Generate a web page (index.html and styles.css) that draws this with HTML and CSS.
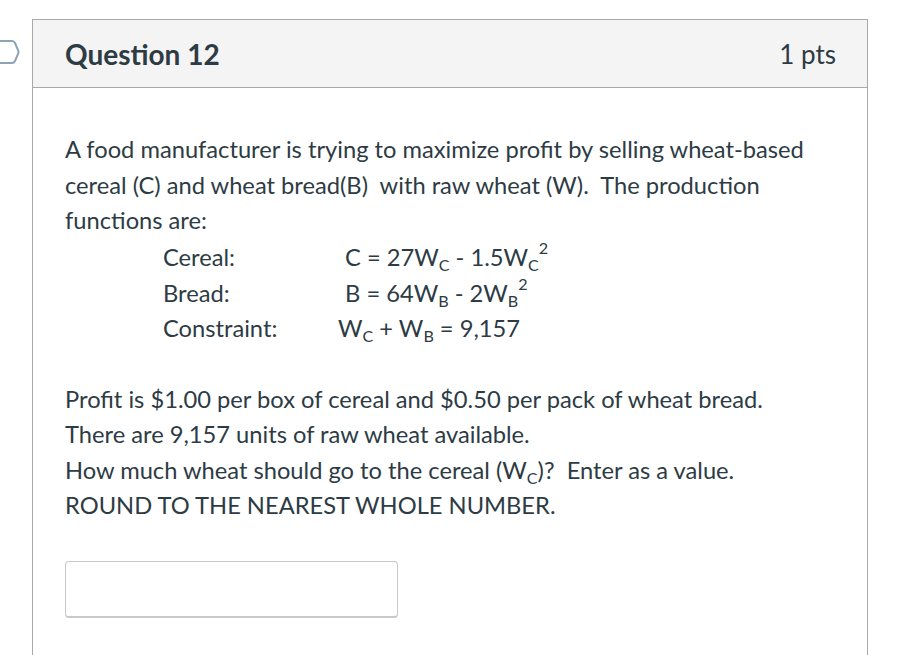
FILE: index.html
```html
<!DOCTYPE html>
<html>
<head>
<meta charset="utf-8">
<link rel="stylesheet" href="styles.css">
</head>
<body>
<div class="page">
  <div class="gutter">
    <svg class="flag" width="20" height="26" viewBox="0 0 20 26">
      <path d="M-2 2 H12 Q14 2 15 4 L18 11 Q19 13 18 15 L15 22 Q14 24 12 24 H-2" fill="none" stroke="#8da3b6" stroke-width="2"/>
    </svg>
  </div>
  <div class="card">
    <div class="header">
      <div class="title">Question 12</div>
      <div class="pts">1 pts</div>
    </div>
    <div class="content">
      <p class="text">A food manufacturer is trying to maximize profit by selling wheat-based cereal (C) and wheat bread(B)&nbsp; with raw wheat (W).&nbsp; The production functions are:</p>
      <div class="formulas">
        <div class="row"><span class="label">Cereal:</span><span class="eq eq-c">C = 27W<sub>C</sub> - 1.5W<sub>C</sub><sup>2</sup></span></div>
        <div class="row"><span class="label">Bread:</span><span class="eq eq-b">B = 64W<sub>B</sub> - 2W<sub>B</sub><sup>2</sup></span></div>
        <div class="row"><span class="label">Constraint:</span><span class="eq eq-k">W<sub>C</sub> + W<sub>B</sub> = 9,157</span></div>
      </div>
      <p class="text blank">&nbsp;</p>
      <p class="text">Profit is $1.00 per box of cereal and $0.50 per pack of wheat bread.<br>There are 9,157 units of raw wheat available.<br>How much wheat should go to the cereal (W<sub>C</sub>)?&nbsp; Enter as a value.<br>ROUND TO THE NEAREST WHOLE NUMBER.</p>
      <div class="answer"></div>
    </div>
  </div>
</div>
</body>
</html>
```
FILE: styles.css
```css
html, body {
  margin: 0;
  padding: 0;
  background: #ffffff;
}
body {
  font-family: Lato, "Open Sans", sans-serif;
  color: #2d3b45;
  width: 907px;
  height: 655px;
  overflow: hidden;
}
.page {
  display: flex;
  align-items: flex-start;
}
.gutter {
  width: 32px;
  flex: none;
  padding-top: 39px;
}
.flag {
  display: block;
}
.card {
  margin-top: 19px;
  width: 836px;
  height: 636px;
  box-sizing: border-box;
  border: 1px solid #a9a9a9;
  border-bottom: none;
  flex: none;
}
.header {
  height: 67px;
  background: #f4f4f4;
  border-bottom: 1px solid #a9a9a9;
  display: flex;
  align-items: center;
  justify-content: space-between;
  padding: 0 31px 0 32px;
}
.title {
  font-weight: 700;
  font-size: 28px;
}
.pts {
  font-size: 26px;
  color: #2d3b45;
}
.content {
  padding: 44px 32px 0 32px;
}
.text {
  margin: 0;
  font-size: 23.7px;
  line-height: 35.5px;
}
sub {
  font-size: 0.68em;
  vertical-align: -0.32em;
  line-height: 0;
}
sup {
  font-size: 0.68em;
  vertical-align: 0.72em;
  line-height: 0;
}
.formulas {
  padding-left: 98px;
  font-size: 23.7px;
  padding-top: 1px;
}
.row {
  display: flex;
  height: 35.5px;
  align-items: center;
}
.label {
  width: 175px;
  flex: none;
}
.eq-c, .eq-b {
  padding-left: 7px;
}
.eq-k {
  padding-left: 0;
}
.answer {
  margin-top: 37px;
  width: 331px;
  height: 54px;
  border: 1px solid #c8c8c8;
  border-bottom-width: 2px;
  border-radius: 4px;
}
```
